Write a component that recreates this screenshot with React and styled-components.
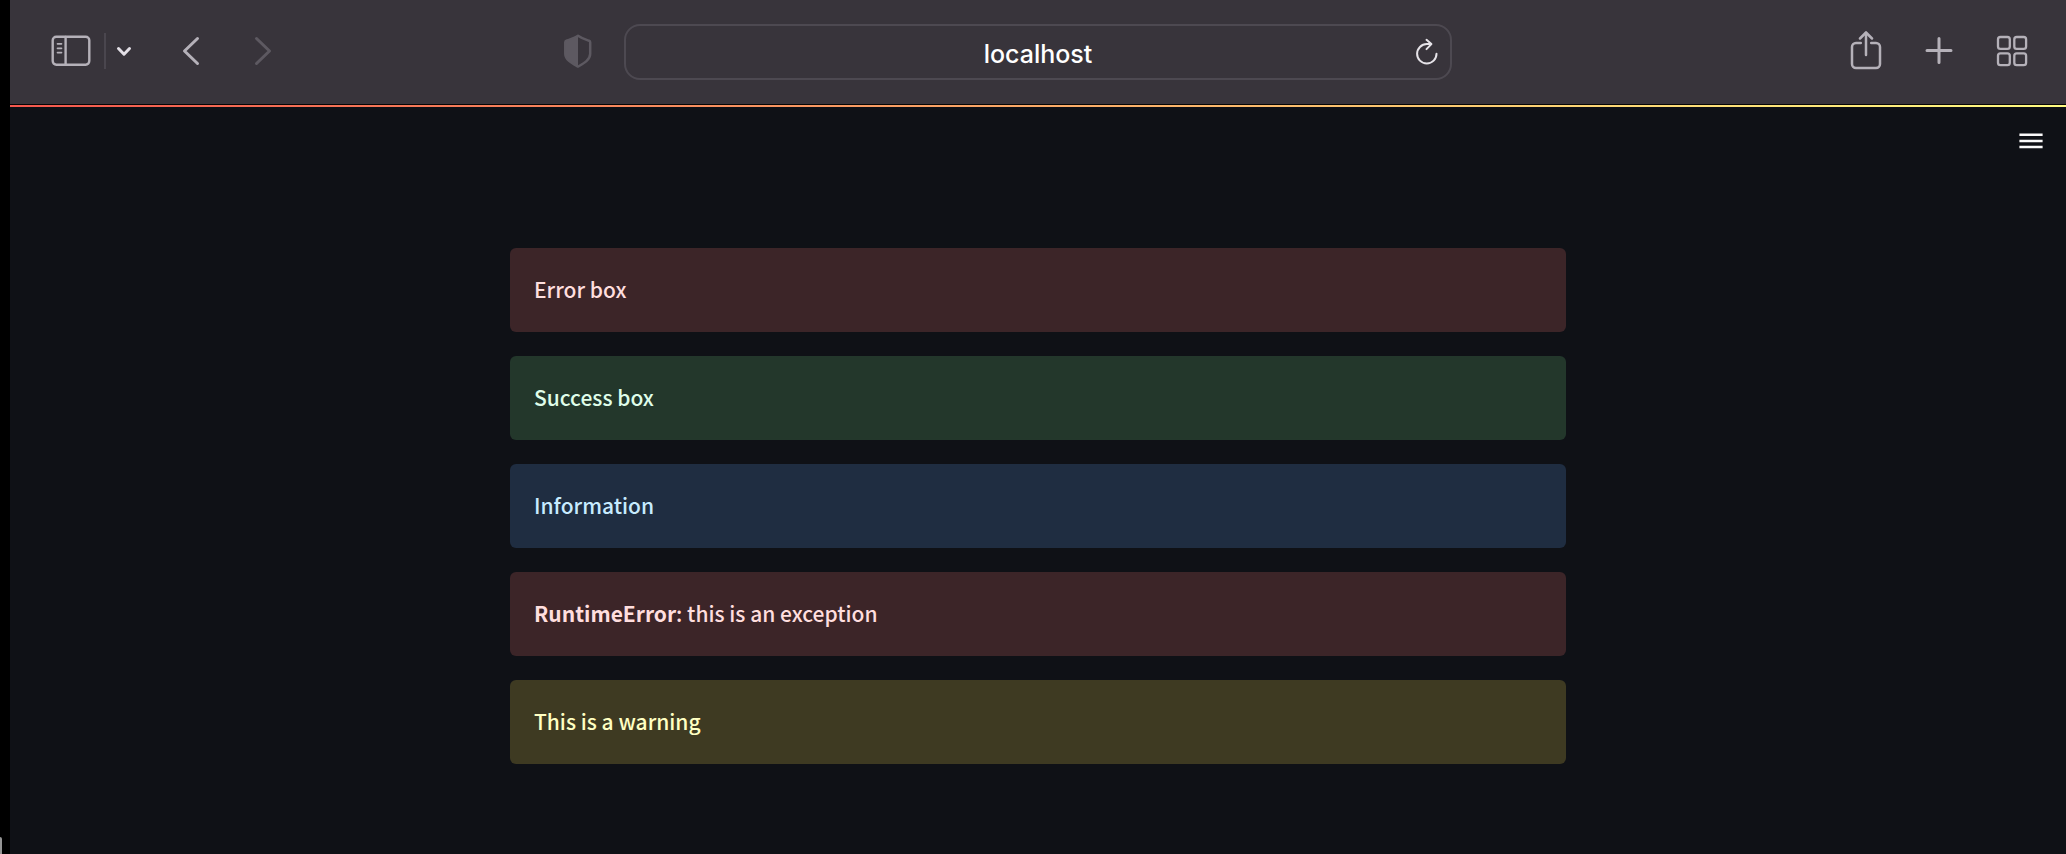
import React from "react";
import styled, { createGlobalStyle } from "styled-components";

const GlobalStyle = createGlobalStyle`
  *, *::before, *::after { box-sizing: border-box; }
  body { margin: 0; background: #000; }
  button { font: inherit; }
`;

const Screen = styled.div`
  display: flex;
  min-height: 100vh;
  background: #000;
`;

const Gutter = styled.div`
  flex: none;
  width: 10px;
  display: flex;
  align-items: flex-end;
`;

const WindowEdge = styled.div`
  width: 2px;
  height: 17px;
  background: #949494;
  border-top-right-radius: 2px;
`;

const Browser = styled.div`
  flex: 1;
  min-width: 0;
  display: flex;
  flex-direction: column;
  background: #0f1116;
`;

const Toolbar = styled.header`
  display: grid;
  grid-template-columns: 1fr minmax(0, 828px) 1fr;
  align-items: center;
  height: 105px;
  padding-bottom: 1px;
  background: #38343b;
  border-bottom: 1px solid #050505;
`;

const LeftTools = styled.div`
  display: flex;
  align-items: center;
  padding: 0 31px 2px 32px;
`;

const RightTools = styled.div`
  display: flex;
  align-items: center;
  justify-content: flex-end;
  gap: 25px;
  padding: 0 30px 2px 0;
`;

const IconButton = styled.button`
  display: flex;
  align-items: center;
  justify-content: center;
  flex: none;
  width: ${(p) => p.$width || 48}px;
  height: 48px;
  padding: 0;
  border: 0;
  background: none;
  color: ${(p) => p.$color || "#b5b1b9"};
  margin-left: ${(p) => p.$push || "0"};
  svg { display: block; }
`;

const Divider = styled.span`
  width: 2px;
  height: 36px;
  margin-left: 4px;
  background: #4a464e;
`;

const AddressBar = styled.form`
  display: flex;
  align-items: center;
  height: 56px;
  padding: 0 0 0 48px;
  border: 2px solid #4d4951;
  border-radius: 16px;
`;

const AddressInput = styled.input`
  flex: 1;
  min-width: 0;
  height: 48px;
  padding: 4px 0 0;
  border: 0;
  outline: 0;
  background: none;
  color: #fff;
  font: 500 25px/32px Inter, "Liberation Sans", sans-serif;
  text-align: center;
`;

const Decoration = styled.div`
  height: 2px;
  background: linear-gradient(90deg, #f5584e, #fffb80);
`;

const AppHeader = styled.div`
  display: flex;
  justify-content: flex-end;
  padding: 10px 11px 0 0;
`;

const Alerts = styled.main`
  display: flex;
  flex-direction: column;
  gap: 24px;
  width: 100%;
  max-width: 1104px;
  margin: 0 auto;
  padding: 83px 24px 90px;
`;

const Alert = styled.div`
  padding: 23px 24px 25px;
  border-radius: 6px;
  background: ${(p) => p.$background};
  color: ${(p) => p.$color};
  font: 500 21px/36px "Noto Sans CJK SC", "Noto Sans", sans-serif;
`;

const stroke = { fill: "none", stroke: "currentColor", strokeLinecap: "round", strokeLinejoin: "round" };

const SidebarIcon = () => (
  <svg width="40" height="32" viewBox="0 0 40 32" {...stroke} strokeWidth="2.4">
    <rect x="1.7" y="1.7" width="36.6" height="28" rx="3.6" />
    <path d="M14.6 2v27.5" />
    <path d="M6.500 8.800h4M6.500 13.300h4M6.500 17.600h4" strokeWidth="1.7" />
  </svg>
);
const DownIcon = () => (
  <svg width="18" height="12" viewBox="0 0 18 12" {...stroke} strokeWidth="3">
    <path d="M3.5 3.500 9 9.200 14.500 3.500" />
  </svg>
);
const BackIcon = () => (
  <svg width="20" height="32" viewBox="0 0 20 32" {...stroke} strokeWidth="3">
    <path d="M16.500 3.500 3.500 16l13 12.500" />
  </svg>
);
const ForwardIcon = () => (
  <svg width="20" height="32" viewBox="0 0 20 32" {...stroke} strokeWidth="3">
    <path d="M3.500 3.500 16.500 16l-13 12.500" />
  </svg>
);
const ShieldIcon = () => (
  <svg width="28" height="34" viewBox="0 0 28 34" {...stroke} strokeWidth="2.500">
    <path d="M14 1.800C10.500 4.300 6 5.500 2.500 6.700c-.8.300-1.200.8-1.200 1.600v11.500C1.300 26 8.500 29.500 14 32.600c5.500-3.100 12.200-6.600 12.200-12.800V8.300c0-.8-.4-1.300-1.200-1.600C21.500 5.500 17.500 4.300 14 1.800Z" />
    <path d="M14 1.800C10.500 4.300 6 5.500 2.500 6.700c-.8.300-1.200.8-1.200 1.600v11.500C1.300 26 8.500 29.500 14 32.600Z" fill="currentColor" stroke="none" />
  </svg>
);
const ReloadIcon = () => (
  <svg width="24" height="28" viewBox="0 0 24 28" {...stroke} strokeWidth="2">
    <path d="M22.500 15.800A9.700 9.700 0 1 1 12.800 6.100h4.200" />
    <path d="m12.500 1.800 4.900 4.300-4.900 5" />
  </svg>
);
const ShareIcon = () => (
  <svg width="32" height="40" viewBox="0 0 32 40" {...stroke} strokeWidth="2.500">
    <path d="M10.800 12H6a4 4 0 0 0-4 4v17a4 4 0 0 0 4 4h20a4 4 0 0 0 4-4V16a4 4 0 0 0-4-4h-4.800" />
    <path d="M16 24V1.800" />
    <path d="m10 7.500 6-6 6 6" />
  </svg>
);
const PlusIcon = () => (
  <svg width="28" height="28" viewBox="0 0 28 28" {...stroke} strokeWidth="3">
    <path d="M14 1.500v24M2 13.500h24" />
  </svg>
);
const GridIcon = () => (
  <svg width="32" height="32" viewBox="0 0 32 32" {...stroke} strokeWidth="2.300">
    <rect x="2" y="2" width="11.800" height="11.800" rx="2.400" />
    <rect x="18.300" y="2" width="11.800" height="11.800" rx="2.400" />
    <rect x="2" y="18.300" width="11.800" height="11.800" rx="2.400" />
    <rect x="18.300" y="18.300" width="11.800" height="11.800" rx="2.400" />
  </svg>
);
const MenuIcon = () => (
  <svg width="24" height="18" viewBox="0 0 24 18" fill="currentColor">
    <path d="M.400 1.500h23.200v2.500H.4zM.4 7.700h23.200v2.500H.4zM.4 13.800h23.200v2.500H.4z" />
  </svg>
);

const alerts = [
  { background: "#3c2528", color: "#ffdede", text: "Error box" },
  { background: "#23372b", color: "#dffde9", text: "Success box" },
  { background: "#1f2d41", color: "#c7ebff", text: "Information" },
  { background: "#3c2528", color: "#ffdede", title: "RuntimeError", text: ": this is an exception" },
  { background: "#3e3a22", color: "#ffffc2", text: "This is a warning" },
];

export default function App() {
  return (
    <Screen>
      <GlobalStyle />
      <Gutter><WindowEdge /></Gutter>
      <Browser>
        <Toolbar>
          <LeftTools>
            <IconButton $width={58} aria-label="Show sidebar"><SidebarIcon /></IconButton>
            <Divider />
            <IconButton $width={36} $color="#e3dfe6" aria-label="Tab groups"><DownIcon /></IconButton>
            <IconButton $push="25px" aria-label="Back"><BackIcon /></IconButton>
            <IconButton $push="24px" $color="#5d5961" aria-label="Forward" disabled><ForwardIcon /></IconButton>
            <IconButton $push="auto" $width={30} $color="#5d5961" aria-label="Privacy report"><ShieldIcon /></IconButton>
          </LeftTools>
          <AddressBar>
            <AddressInput aria-label="Address" defaultValue="localhost" />
            <IconButton type="button" $color="#e6e3e8" aria-label="Reload"><ReloadIcon /></IconButton>
          </AddressBar>
          <RightTools>
            <IconButton aria-label="Share"><ShareIcon /></IconButton>
            <IconButton aria-label="New tab"><PlusIcon /></IconButton>
            <IconButton aria-label="Tab overview"><GridIcon /></IconButton>
          </RightTools>
        </Toolbar>
        <Decoration />
        <AppHeader>
          <IconButton $color="#fafafa" aria-label="Menu"><MenuIcon /></IconButton>
        </AppHeader>
        <Alerts>
          {alerts.map((a, i) => (
            <Alert key={i} role="alert" $background={a.background} $color={a.color}>
              {a.title && <strong>{a.title}</strong>}
              {a.text}
            </Alert>
          ))}
        </Alerts>
      </Browser>
    </Screen>
  );
}
